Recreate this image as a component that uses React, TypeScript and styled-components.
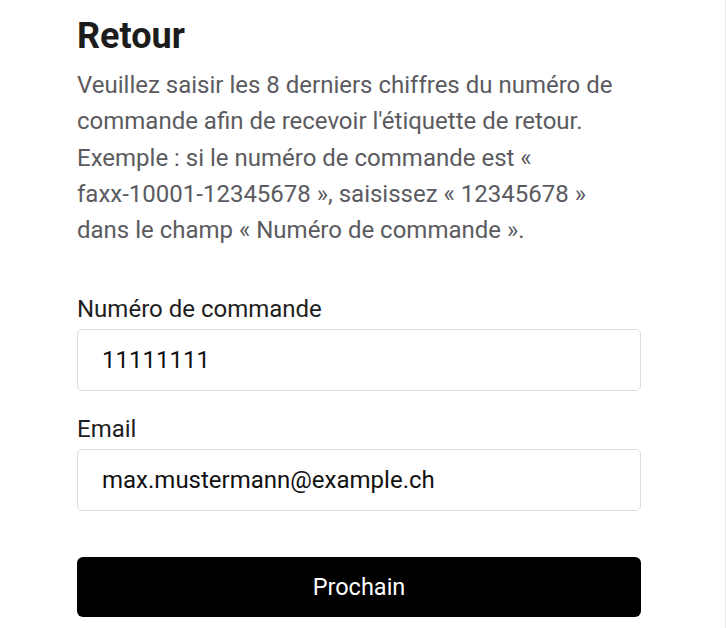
import React from "react";
import styled, { createGlobalStyle } from "styled-components";

const GlobalStyle = createGlobalStyle`
  html, body {
    margin: 0;
    padding: 0;
    background: #ffffff;
  }
  body {
    font-family: Roboto, "Liberation Sans", Arial, sans-serif;
  }
  * {
    box-sizing: border-box;
  }
`;

const Page = styled.div`
  width: 726px;
  height: 628px;
  overflow: hidden;
  border-right: 1px solid #ececec;
`;

const Form = styled.form`
  width: 564px;
  margin-left: 77px;
  padding-top: 12px;
  display: flex;
  flex-direction: column;
`;

const Title = styled.h1`
  margin: 0;
  font-size: 36px;
  line-height: 48px;
  font-weight: 700;
  color: #1c1c1c;
`;

const Intro = styled.p`
  margin: 7px 0 46px;
  font-size: 24px;
  line-height: 36.25px;
  color: #5b5b5f;
`;

const NoWrap = styled.span`
  white-space: nowrap;
`;

const Field = styled.div`
  display: flex;
  flex-direction: column;
  gap: 5px;
  margin-bottom: 23px;
`;

const Label = styled.label`
  font-size: 24px;
  line-height: 30px;
  color: #1e1e1e;
`;

const Input = styled.input`
  height: 62px;
  border: 1px solid #dcdcdc;
  border-radius: 5px;
  padding: 0 24px;
  font-family: inherit;
  font-size: 24px;
  color: #111;
  background: #fff;
  outline: none;
`;

const SubmitButton = styled.button`
  margin-top: 23px;
  height: 60px;
  border: none;
  border-radius: 6px;
  background: #000;
  color: #fff;
  font-family: inherit;
  font-size: 23.5px;
  cursor: pointer;
`;

export default function App() {
  return (
    <>
      <GlobalStyle />
      <Page>
        <Form onSubmit={e => e.preventDefault()}>
          <Title>Retour</Title>
          <Intro>
            Veuillez saisir les 8 derniers chiffres du numéro de commande afin
            de recevoir l'étiquette de retour. Exemple : si le numéro de
            commande est « <NoWrap>faxx-10001-12345678</NoWrap> », saisissez
            « 12345678 » dans le champ « Numéro de commande ».
          </Intro>
          <Field>
            <Label htmlFor="order">Numéro de commande</Label>
            <Input id="order" defaultValue="11111111" />
          </Field>
          <Field>
            <Label htmlFor="email">Email</Label>
            <Input id="email" type="email" defaultValue="max.mustermann@example.ch" />
          </Field>
          <SubmitButton type="submit">Prochain</SubmitButton>
        </Form>
      </Page>
    </>
  );
}
